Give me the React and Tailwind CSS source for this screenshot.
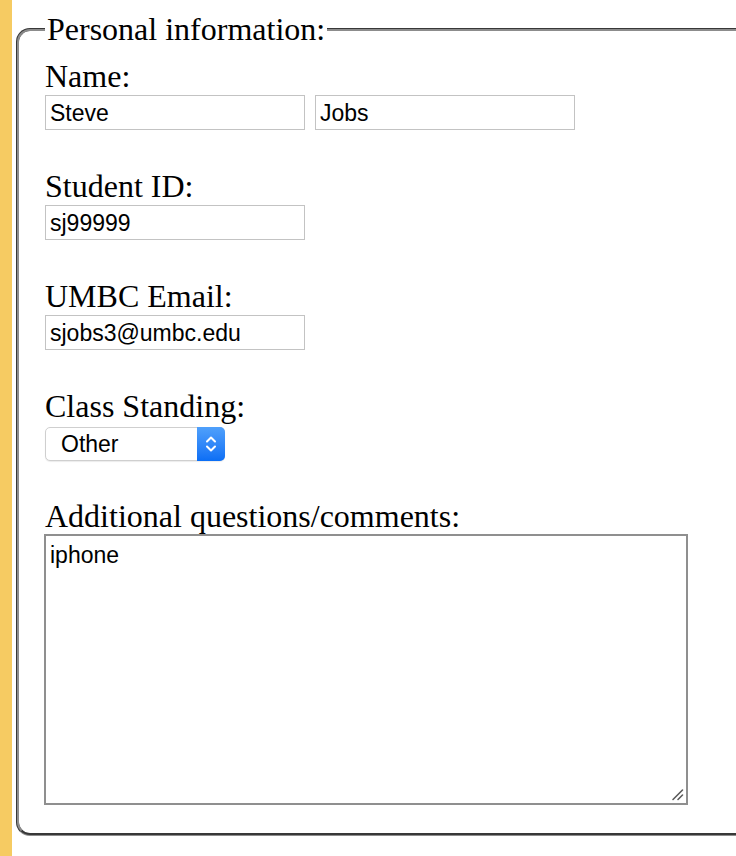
import React from "react";

const serif = { fontFamily: '"Liberation Serif", "Times New Roman", serif' };

function Chevrons() {
  return (
    <svg width="12" height="18" viewBox="0 0 12 18" fill="none" stroke="white" strokeWidth="2" strokeLinecap="round" strokeLinejoin="round">
      <path d="M2 6.5 L6 2.5 L10 6.5" />
      <path d="M2 11.5 L6 15.5 L10 11.5" />
    </svg>
  );
}

export default function App() {
  const inputCls =
    "block h-[35px] w-[260px] border border-[#c3c3c3] bg-white px-[4px] pt-[2px] text-[23px] text-black outline-none font-['Liberation_Sans',Arial,sans-serif]";
  const labelCls = "block text-[32px] leading-[36px] text-black";
  return (
    <div className="w-[736px] h-[856px] overflow-hidden bg-white flex" style={serif}>
      <div className="w-[12px] shrink-0 bg-[#f6cb62]" />
      <div className="w-[4px] shrink-0" />
      <fieldset className="mt-[11px] h-[825px] w-[760px] shrink-0 rounded-[14px] border-[3px] [border-style:groove] border-[#8c8c8c] pl-[26px] pb-[26px]">
        <legend className="px-[2px] text-[32px] leading-[36px] text-black">Personal information:</legend>
        <div className="flex flex-col">
          <label className={labelCls + " mt-[11px]"}>Name:</label>
          <div className="mt-px flex gap-[10px]">
            <input className={inputCls} defaultValue="Steve" />
            <input className={inputCls} defaultValue="Jobs" />
          </div>

          <label className={labelCls + " mt-[38px]"}>Student ID:</label>
          <input className={inputCls + " mt-px"} defaultValue="sj99999" />

          <label className={labelCls + " mt-[38px]"}>UMBC Email:</label>
          <input className={inputCls + " mt-px"} defaultValue="sjobs3@umbc.edu" />

          <label className={labelCls + " mt-[38px]"}>Class Standing:</label>
          <div className="mt-[3px] flex h-[34px] w-[180px] rounded-[5px] border border-[#cfcfcf] bg-white shadow-[0_1px_1px_rgba(0,0,0,0.08)] font-['Liberation_Sans',Arial,sans-serif]">
            <div className="flex flex-1 items-center pl-[15px] pt-[1px] text-[23px] text-black">Other</div>
            <div className="flex w-[28px] items-center justify-center rounded-r-[5px] bg-gradient-to-b from-[#4fa0fb] to-[#0a6ef5] -my-px -mr-px">
              <Chevrons />
            </div>
          </div>

          <label className={labelCls + " mt-[37px]"}>Additional questions/comments:</label>
          <div className="relative -ml-px w-[644px]">
            <textarea
              className="block h-[271px] w-[644px] resize-none border-2 border-[#8f8f8f] bg-white px-[4px] pt-[6px] text-[23px] leading-[26px] text-black outline-none font-['Liberation_Sans',Arial,sans-serif]"
              defaultValue="iphone"
            />
            <svg className="absolute right-[4px] bottom-[4px]" width="14" height="14" viewBox="0 0 14 14" stroke="#5c5c5c" strokeWidth="1.6" strokeLinecap="round">
              <path d="M3 12.5 L12.5 3" />
              <path d="M8 12.5 L12.5 8" />
            </svg>
          </div>
        </div>
      </fieldset>
    </div>
  );
}
